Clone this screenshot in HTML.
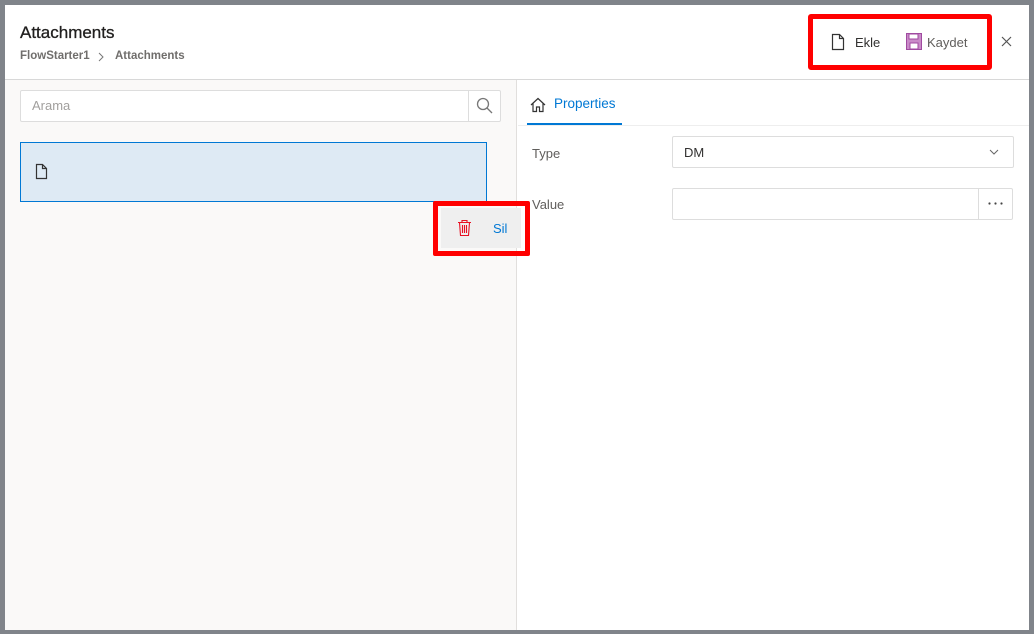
<!DOCTYPE html>
<html><head><style>
*{box-sizing:border-box;margin:0;padding:0}
body{width:1034px;height:634px;background:#80848a;font-family:"Liberation Sans",sans-serif;position:relative;overflow:hidden}
.dlg{position:absolute;left:5px;top:5px;width:1024px;height:625px;background:#fff}
.a{position:absolute}
</style></head><body>
<div class="dlg"></div>
<div class="a" style="left:20px;top:23px;font-size:17px;color:#201f1e;-webkit-text-stroke:0.3px #201f1e">Attachments</div>
<div class="a" style="left:20px;top:50px;font-size:11.5px;color:#706e6c;font-weight:bold">FlowStarter1</div>
<svg class="a" style="left:98px;top:52px" width="7" height="10" viewBox="0 0 7 10"><path d="M1 1l4 4-4 4" fill="none" stroke="#777"/></svg>
<div class="a" style="left:115px;top:50px;font-size:11.5px;color:#706e6c;font-weight:bold">Attachments</div>
<div class="a" style="left:808px;top:14px;width:184px;height:56px;border:5px solid #f00;border-radius:3px"></div>
<svg class="a" style="left:831px;top:33px" width="14" height="18" viewBox="0 0 14 18"><path d="M1.5 1.5h7l4 4v11h-11z M8.5 1.5v4h4" fill="none" stroke="#333" stroke-width="1.2"/></svg>
<div class="a" style="left:855px;top:35px;font-size:13px;color:#323130">Ekle</div>
<svg class="a" style="left:906px;top:33px" width="16" height="17" viewBox="0 0 16 17"><rect x="0.5" y="0.5" width="15" height="16" fill="#c98ac8" stroke="#a04aa0"/><rect x="3" y="1" width="9" height="5" fill="#fff" stroke="#a04aa0"/><rect x="4" y="10" width="8" height="6" fill="#fff" stroke="#a04aa0"/></svg>
<div class="a" style="left:927px;top:35px;font-size:13px;color:#605e5c">Kaydet</div>
<svg class="a" style="left:1001px;top:36px" width="11" height="11" viewBox="0 0 11 11"><path d="M1 1l9 9M10 1l-9 9" stroke="#555" stroke-width="1.2"/></svg>
<div class="a" style="left:5px;top:79px;width:1024px;height:1px;background:#d8d8d8"></div>
<div class="a" style="left:5px;top:80px;width:512px;height:550px;background:#faf9f8;border-right:1px solid #e1dfdd"></div>
<div class="a" style="left:20px;top:90px;width:481px;height:32px;background:#fff;border:1px solid #ddd;border-radius:2px"></div>
<div class="a" style="left:468px;top:91px;width:1px;height:30px;background:#ddd"></div>
<svg class="a" style="left:476px;top:97px" width="18" height="18" viewBox="0 0 18 18"><circle cx="7" cy="7" r="5.5" fill="none" stroke="#777" stroke-width="1.3"/><path d="M11 11l5 5" stroke="#777" stroke-width="1.3"/></svg>
<div class="a" style="left:32px;top:98px;font-size:13px;color:#a19f9d">Arama</div>
<div class="a" style="left:20px;top:142px;width:467px;height:60px;background:#deeaf4;border:1px solid #0078d4"></div>
<svg class="a" style="left:35px;top:163px" width="14" height="17" viewBox="0 0 14 17"><path d="M1.5 1.5h6l4 4v10h-10z M7.5 1.5v4h4" fill="none" stroke="#333" stroke-width="1.2"/></svg>
<div class="a" style="left:433px;top:201px;width:97px;height:55px;border:5px solid #f00;border-radius:2px"></div>
<div class="a" style="left:441px;top:208px;width:80px;height:40px;background:#efefef"></div>
<svg class="a" style="left:457px;top:219px" width="15" height="18" viewBox="0 0 15 18"><path d="M1 3.5h13M5 3.5V1.5h5v2M2.5 3.5l1 13h8l1-13M5.5 6v8M7.5 6v8M9.5 6v8" fill="none" stroke="#e81123" stroke-width="1.1"/></svg>
<div class="a" style="left:493px;top:221px;font-size:13px;color:#0078d4">Sil</div>
<svg class="a" style="left:530px;top:97px" width="16" height="16" viewBox="0 0 16 16"><path d="M1 8L8 1.5 15 8M3 6.5V14.5h3.5V10h3v4.5H13V6.5" fill="none" stroke="#333" stroke-width="1.2"/></svg>
<div class="a" style="left:554px;top:96px;font-size:13.5px;color:#0078d4">Properties</div>
<div class="a" style="left:527px;top:123px;width:95px;height:2px;background:#0078d4"></div>
<div class="a" style="left:518px;top:125px;width:511px;height:1px;background:#eee"></div>
<div class="a" style="left:532px;top:146px;font-size:13px;color:#605e5c">Type</div>
<div class="a" style="left:672px;top:136px;width:342px;height:32px;border:1px solid #ddd;border-radius:2px"></div>
<div class="a" style="left:684px;top:145px;font-size:13px;color:#323130">DM</div>
<svg class="a" style="left:989px;top:149px" width="10" height="6" viewBox="0 0 10 6"><path d="M1 1l4 4 4-4" fill="none" stroke="#666"/></svg>
<div class="a" style="left:532px;top:197px;font-size:13px;color:#605e5c">Value</div>
<div class="a" style="left:672px;top:188px;width:341px;height:32px;border:1px solid #ddd;border-radius:2px"></div>
<div class="a" style="left:978px;top:189px;width:1px;height:30px;background:#ddd"></div>
<svg class="a" style="left:988px;top:202px" width="16" height="3" viewBox="0 0 16 3"><circle cx="1.5" cy="1.5" r="1.1" fill="#444"/><circle cx="7.5" cy="1.5" r="1.1" fill="#444"/><circle cx="13.5" cy="1.5" r="1.1" fill="#444"/></svg>
</body></html>
